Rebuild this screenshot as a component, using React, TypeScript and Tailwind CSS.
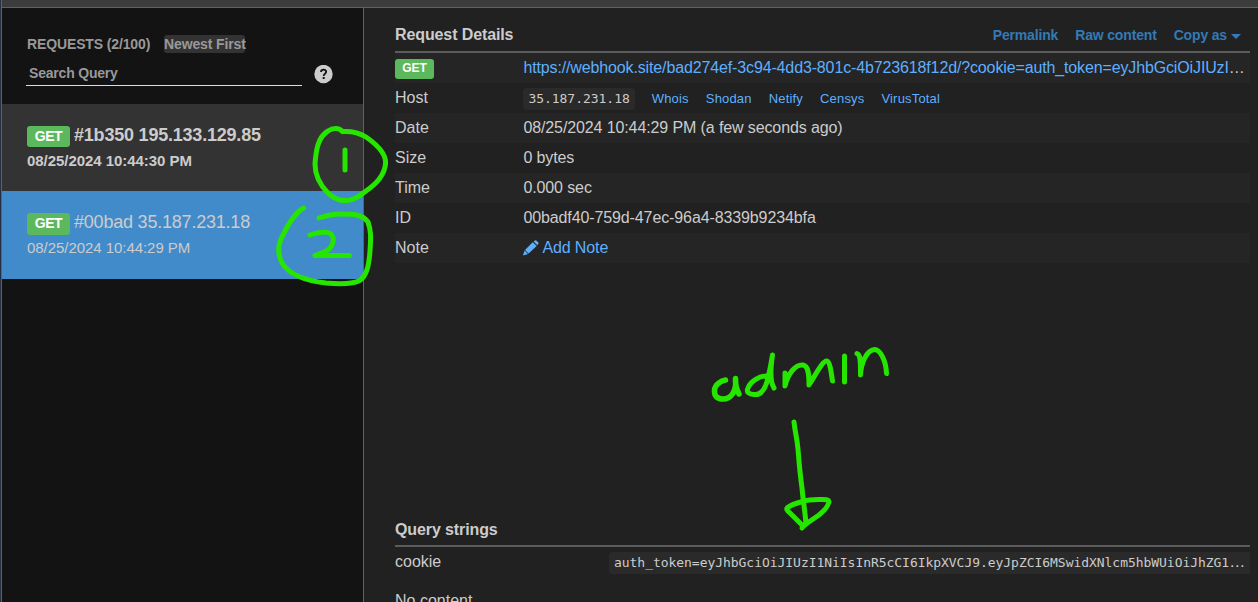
import type { ReactNode } from 'react';

const lookups = ['Whois', 'Shodan', 'Netify', 'Censys', 'VirusTotal'];

function Row({ label, children, striped }: { label: ReactNode; children: ReactNode; striped?: boolean }) {
  return (
    <div className={`flex h-[30px] pb-px items-center ${striped ? 'bg-[#252525]' : ''}`}>
      <div className="w-[128.4px] shrink-0">{label}</div>
      <div className="flex min-w-0 grow items-center pr-1 tracking-[-0.110px]">{children}</div>
    </div>
  );
}

function RequestItem({ id, date, active }: { id: string; date: string; active?: boolean }) {
  return (
    <div
      className={`flex flex-col pl-[25px] text-[#cccccc] ${
        active ? 'h-[88px] bg-[#428bca] pt-[19px]' : 'h-[87px] bg-[#333333] pt-[19px] font-bold'
      }`}
    >
      <div className="flex h-[23px] items-center whitespace-nowrap">
        <span
          className={`mt-1 flex w-[43px] shrink-0 items-center justify-center rounded-[3px] bg-[#5cb85c] pb-px text-[14px] font-bold tracking-[-0.500px] text-white ${
            active ? 'h-[22px]' : 'h-[21px]'
          }`}
        >
          GET
        </span>
        <span className="ml-1 text-[18px] leading-[22px] tracking-[-0.210px]">{id}</span>
      </div>
      <span className="mt-[5px] text-[15px] leading-5 tracking-[-0.050px] whitespace-nowrap">{date}</span>
    </div>
  );
}

function Annotations() {
  return (
    <svg
      className="pointer-events-none absolute inset-0"
      width="1258"
      height="602"
      viewBox="0 0 1258 602"
      fill="none"
      stroke="#26e600"
      strokeWidth="5"
      strokeLinecap="round"
      strokeLinejoin="round"
    >
      <path d="M342.500 131.500C339 127.500 333 127.500 328 131C318 137 316 150 315 164C315 176 321 186 328 193C337 202 349 203 359 196C369 189 382 181 385 167C388 157 379 146 366 137C358 132 352 131 343 131.500" />
      <path d="M345 150V170" />
      <path d="M303.500 208C295 213 287 226 281 239C278 246 278 255 282 263C290 276 308 281 326 283C338 284 352 284 359 281C367 276 369 265 370 251C371 237 371 230 368 222C362 214 354 214 340 214C332 214 325 216 319 218" />
      <path d="M310 235C318 232 328 231 331 234C336 240 332 249 324 252C320 254 316 255 315 255.500L349.500 255.500" />
      <path d="M725.500 380C720 381 715 385 714.500 390C714 396 717 399 723 399C731 399 737 391 735.500 378.500C735 385 737 390 739 394" strokeWidth="5.500" />
      <path d="M768 376C760 375 750 382 748 388C746 392 749 394.500 754 394.500C765 396 768 382 772.500 355C770 372 770 382 774 388" />
      <path d="M785 373V386C788 373 796 364 803 365C809 366 809 376 809 385C816 374 823 360 827 361C830 362 831 371 832.500 381" />
      <path d="M844.500 356V382" />
      <path d="M857 353.500C861 355 860.500 363 860.500 375C861 364 866 350 875 349.500C880 350 886 360 886.500 373.500" />
      <path d="M794 422C795 432 797 438 798 449C799 462 800 474 802 488C803 500 805 511 806 524" />
      <path d="M802.500 501.500C797 503 791 505 787.500 507.500C786 509 787 511 790 513L803 526L819 515C824 511 828 506 829 502C829 499 824 499.500 819 499.500C812 499.500 807 500 802.500 501.500" />
      <path d="M802 528L806 523" />
    </svg>
  );
}

export default function App() {
  return (
    <div className="relative flex h-[602px] w-[1258px] overflow-hidden bg-[#212121] font-['Liberation_Sans',Arial,sans-serif] text-[16px] leading-5 text-[#cccccc]">
      <div className="w-0.5 shrink-0 border-r border-[#626262] bg-[#253142]" />
      <div className="flex min-w-0 grow flex-col">
        <div className="h-2 shrink-0 border-b border-[#626262] bg-[#3c3c3c]" />
        <div className="flex min-h-0 grow">
          <aside className="w-[362px] shrink-0 border-r border-[#626262] bg-[#131313]">
            <div className="flex h-24 flex-col pl-6 pt-[26px] text-[14px] font-bold text-[#999999]">
              <div className="flex h-5 items-center whitespace-nowrap pl-px">
                <span className="w-[124px] tracking-[-0.130px]">REQUESTS (2/100)</span>
                <span className="ml-[13px] h-[18px] w-[81px] rounded-[3px] bg-[#333333] leading-[18px] tracking-[-0.120px]">
                  Newest First
                </span>
              </div>
              <div className="mt-1 flex">
                <div className="h-[28px] w-[276px] border-b border-[#dddddd] pl-[3px] pt-[5px] tracking-[-0.200px]">
                  Search Query
                </div>
                <svg className="ml-3 mt-[7px]" width="19" height="19" viewBox="0 0 19 19">
                  <circle cx="9.500" cy="9" r="9.200" fill="#cccccc" />
                  <path
                    d="M7 7C7 3.800 12.200 3.900 12.200 6.800C12.200 8.700 9.700 8.700 9.700 10.900"
                    fill="none"
                    stroke="#131313"
                    strokeWidth="1.800"
                  />
                  <rect x="8.700" y="12" width="2" height="2" fill="#131313" />
                </svg>
              </div>
            </div>
            <RequestItem id="#1b350 195.133.129.85" date="08/25/2024 10:44:30 PM" />
            <RequestItem id="#00bad 35.187.231.18" date="08/25/2024 10:44:29 PM" active />
          </aside>

          <main className="flex min-w-0 grow flex-col overflow-hidden pl-[31px] pr-2">
            <section>
              <header className="flex h-[45px] items-center justify-between border-b-2 border-[#5c5c5c] pt-[11px]">
                <h2 className="font-bold tracking-[-0.110px]">Request Details</h2>
                <nav className="flex items-center gap-[17px] pr-[9px] text-[14px] font-bold tracking-[-0.160px] text-[#337ab7]">
                  <a>Permalink</a>
                  <a>Raw content</a>
                  <a className="flex items-center gap-1">
                    Copy as
                    <svg className="mt-[3px]" width="10" height="5" viewBox="0 0 10 5" fill="currentColor">
                      <path d="M0 0H10L5 5Z" />
                    </svg>
                  </a>
                </nav>
              </header>
              <Row
                striped
                label={
                  <span className="mt-0.5 flex h-5 w-[39px] items-center justify-center rounded-[3px] bg-[#5cb85c] pb-0.5 text-[12px] font-bold text-white">
                    GET
                  </span>
                }
              >
                <span className="truncate tracking-[-0.135px]">
                  <a className="text-[#5eb0ff]">
                    https://webhook.site/bad274ef-3c94-4dd3-801c-4b723618f12d/?cookie=auth_token=eyJhbGciOiJIUzI1NiIsInR5cCI6IkpXVCJ9
                  </a>
                </span>
              </Row>
              <Row label="Host">
                <code className="mt-[2px] h-[22px] rounded bg-[#2a2a2a] px-[5px] font-['DejaVu_Sans_Mono',monospace] text-[13px] leading-[21px] tracking-[-0.030px]">
                  35.187.231.18
                </code>
                <div className="ml-[17px] mt-0.5 flex gap-[17px] text-[13px] tracking-[0.180px] text-[#5eb0ff]">
                  {lookups.map((name) => (
                    <a key={name}>{name}</a>
                  ))}
                </div>
              </Row>
              <Row striped label="Date">08/25/2024 10:44:29 PM (a few seconds ago)</Row>
              <Row label="Size">0 bytes</Row>
              <Row striped label="Time">0.000 sec</Row>
              <Row label="ID">00badf40-759d-47ec-96a4-8339b9234bfa</Row>
              <Row striped label="Note">
                <a className="flex items-center gap-[3px] text-[#5eb0ff]">
                  <svg width="16" height="16" viewBox="0 0 16 16" fill="currentColor">
                    <path d="M0 15.500L1.500 10.500L5 14Z" />
                    <path d="M2 9.900L9.700 2.200L13.700 5.900L5.600 13.500Z" />
                    <path d="M10.600 1.600L12 .4Q12.600 -.1 13.200 .5L15.300 2.600Q15.900 3.200 15.300 3.800L14.300 5.200Z" />
                  </svg>
                  Add Note
                </a>
              </Row>
            </section>

            <section className="mt-[246px]">
              <header className="flex h-[38px] items-center border-b-2 border-[#5c5c5c] pt-[5px]">
                <h2 className="font-bold tracking-[-0.110px]">Query strings</h2>
              </header>
              <div className="flex h-[30px] items-center">
                <span className="w-[214px] shrink-0 pb-px">cookie</span>
                <div className="mt-px h-[22px] min-w-0 grow truncate rounded-l bg-[#2a2a2a] pl-[5px] pr-[3px] leading-[19px]">
                  <code className="font-['DejaVu_Sans_Mono',monospace] text-[13px] tracking-[-0.040px]">
                    auth_token=eyJhbGciOiJIUzI1NiIsInR5cCI6IkpXVCJ9.eyJpZCI6MSwidXNlcm5hbWUiOiJhZG1pbiJ9
                  </code>
                </div>
              </div>
              <div className="mt-[14px] whitespace-nowrap">No content</div>
            </section>
          </main>
        </div>
      </div>
      <Annotations />
    </div>
  );
}
